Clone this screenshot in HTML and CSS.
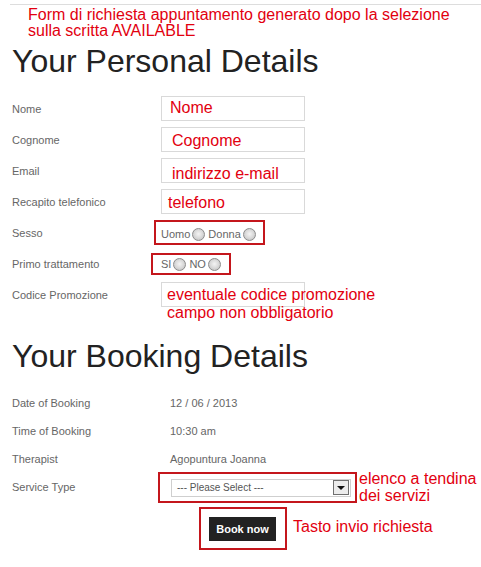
FILE: index.html
```html
<!DOCTYPE html>
<html>
<head>
    <meta name="viewport" content="width=device-width, initial-scale=1">
    <link rel="stylesheet" href="styles.css">
</head>
<body>
    <div class="page">
        <div class="note">Form di richiesta appuntamento generato dopo la selezione<br>sulla scritta AVAILABLE</div>

        <h1>Your Personal Details</h1>
        <div class="form">
            <div class="row">
                <span class="label">Nome</span>
                <div class="field nome">Nome</div>
            </div>
            <div class="row">
                <span class="label">Cognome</span>
                <div class="field">Cognome</div>
            </div>
            <div class="row">
                <span class="label">Email</span>
                <div class="field email">indirizzo e-mail</div>
            </div>
            <div class="row">
                <span class="label">Recapito telefonico</span>
                <div class="field tel">telefono</div>
            </div>
            <div class="row">
                <span class="label">Sesso</span>
                <div class="choice sesso">
                    <span>Uomo</span><input type="radio" name="sesso">
                    <span>Donna</span><input type="radio" name="sesso">
                </div>
            </div>
            <div class="row">
                <span class="label">Primo trattamento</span>
                <div class="choice primo">
                    <span>SI</span><input type="radio" name="primo">
                    <span>NO</span><input type="radio" name="primo">
                </div>
            </div>
            <div class="row">
                <span class="label">Codice Promozione</span>
                <div class="field promo">eventuale codice promozione<br>campo non obbligatorio</div>
            </div>
        </div>

        <h1 class="second">Your Booking Details</h1>
        <div class="booking">
            <div class="row short">
                <span class="label wide">Date of Booking</span>
                <span class="value">12 / 06 / 2013</span>
            </div>
            <div class="row short">
                <span class="label wide">Time of Booking</span>
                <span class="value">10:30 am</span>
            </div>
            <div class="row short">
                <span class="label wide">Therapist</span>
                <span class="value">Agopuntura Joanna</span>
            </div>
            <div class="row short">
                <span class="label wide">Service Type</span>
                <div class="select-box">
                    <div class="select">
                        <span>--- Please Select ---</span>
                        <span class="arrow"></span>
                    </div>
                </div>
                <div class="aside">elenco a tendina<br>dei servizi</div>
            </div>
            <div class="submit">
                <div class="book-box">
                    <button type="button" class="book">Book now</button>
                </div>
                <span class="aside tasto">Tasto invio richiesta</span>
            </div>
        </div>
    </div>
</body>
</html>
```

FILE: styles.css
```css
body {
    margin: 0;
    background-color: #fff;
    font-family: "Liberation Sans", Arial, sans-serif;
}

.page {
    padding-top: 4px;
}

/* note rosse sopra lo screenshot */
.note {
    margin-left: 10px;
    border-top: 1px solid #ddd;
    padding: 2px 0 0 18px;
    color: #e2000f;
    font-size: 16px;
    line-height: 16px;
}

h1 {
    margin: 4px 0 0;
    padding-left: 12px;
    font-size: 32px;
    line-height: 36px;
    font-weight: normal;
    color: #222;
}

h1.second {
    margin-top: 28px;
}

.form {
    margin-top: 14px;
    padding-left: 12px;
}

.row {
    display: flex;
    align-items: center;
    height: 31px;
}

.label {
    width: 149px;
    flex-shrink: 0;
    font-size: 11px;
    color: #666;
}

.field {
    width: 144px;
    height: 25px;
    box-sizing: border-box;
    border: 1px solid #d9d9d9;
    padding: 4px 0 0 10px;
    color: #e2000f;
    font-size: 16px;
    line-height: 18px;
    white-space: nowrap;
}

.field.nome {
    padding-top: 2px;
    padding-left: 8px;
}

.field.email {
    padding-top: 6px;
}

.field.tel {
    padding-left: 6px;
}

.field.promo {
    padding-top: 3px;
    padding-left: 5px;
}

.choice {
    display: flex;
    align-items: center;
    box-sizing: border-box;
    border: 2px solid #c4161c;
    font-size: 11px;
    line-height: 13px;
    color: #666;
}

.choice.sesso {
    margin-left: -7px;
    width: 111px;
    height: 25px;
    padding: 3px 0 0 5px;
}

.choice.primo {
    margin-left: -10px;
    width: 80px;
    height: 22px;
    padding: 2px 0 0 8px;
}

.choice input {
    -webkit-appearance: none;
    appearance: none;
    width: 13px;
    height: 13px;
    box-sizing: border-box;
    margin: 0 3px 0 2px;
    border: 1px solid #8c8c8c;
    border-radius: 50%;
    background: radial-gradient(circle at 50% 45%, #f4f4f4 0, #dcdcdc 45%, #b9b9b9 100%);
}

.booking {
    margin-top: 15px;
    padding-left: 12px;
}

.row.short {
    height: 28px;
}

.label.wide {
    width: 158px;
}

.value {
    font-size: 11px;
    color: #666;
}

.select-box {
    margin-left: -12px;
    width: 199px;
    height: 31px;
    box-sizing: border-box;
    border: 2px solid #c4161c;
    padding: 5px 4px 0 11px;
    flex-shrink: 0;
}

.select {
    display: flex;
    align-items: center;
    justify-content: space-between;
    width: 180px;
    height: 18px;
    box-sizing: border-box;
    border: 1px solid #cfcfcf;
    padding-left: 5px;
    font-size: 10px;
    color: #555;
}

.arrow {
    position: relative;
    width: 16px;
    height: 15px;
    box-sizing: border-box;
    margin-right: 1px;
    border: 1px solid #6f6f6f;
    background-color: #ececec;
}

.arrow:before {
    position: absolute;
    content: "";
    left: 3px;
    top: 5px;
    border-left: 4px solid transparent;
    border-right: 4px solid transparent;
    border-top: 4px solid #111;
}

.aside {
    margin-left: 2px;
    color: #e2000f;
    font-size: 16px;
    line-height: 17px;
    white-space: nowrap;
}

.submit {
    display: flex;
    align-items: center;
    margin: 6px 0 0 187px;
}

.book-box {
    width: 88px;
    box-sizing: border-box;
    border: 2px solid #c4161c;
    padding: 8px 9px 7px 8px;
}

.book {
    display: block;
    width: 67px;
    height: 24px;
    padding: 0;
    border: none;
    background-color: #222;
    color: #fff;
    font-family: "Liberation Sans", Arial, sans-serif;
    font-size: 11px;
    font-weight: bold;
}

.aside.tasto {
    margin-left: 6px;
    margin-bottom: 4px;
}
```
